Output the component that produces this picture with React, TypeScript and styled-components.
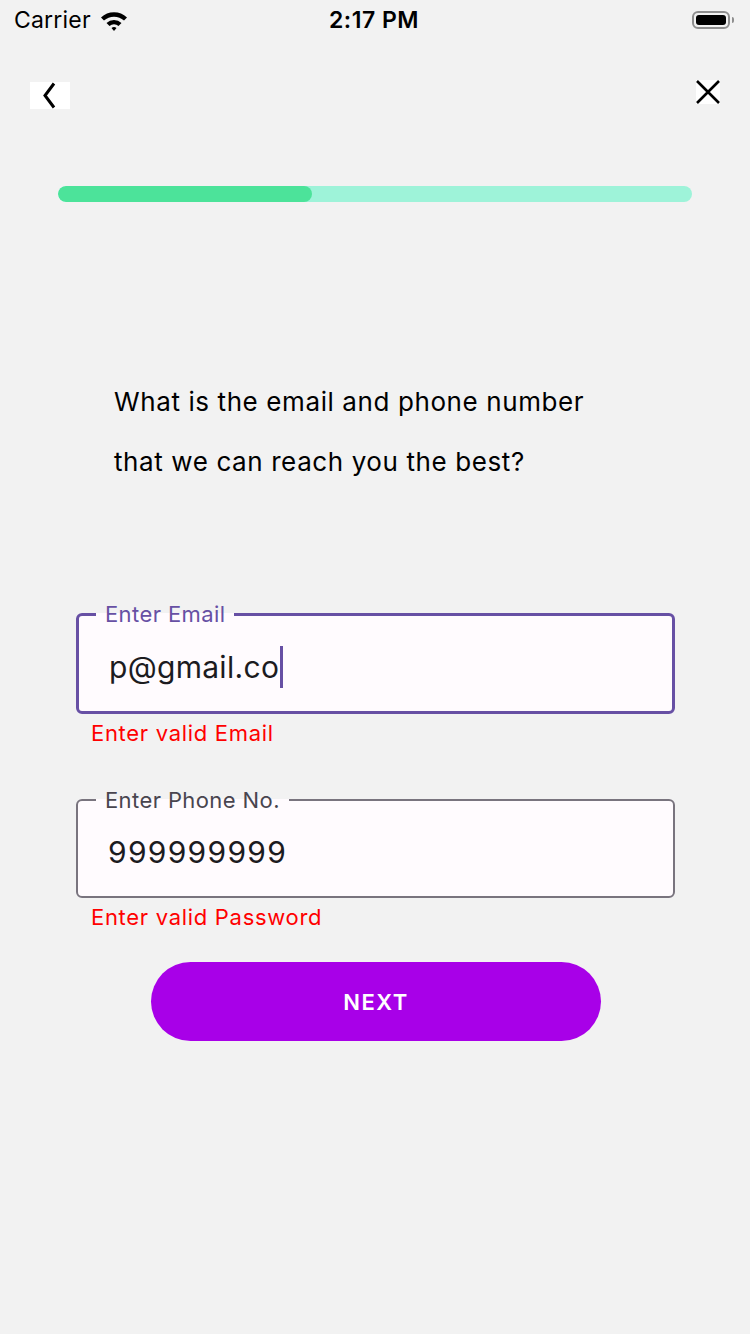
import React from "react";
import styled, { createGlobalStyle } from "styled-components";

const PURPLE = "#6750A4";
const OUTLINE = "#79747E";
const FIELD_BG = "#FFFBFE";
const ERROR = "#FF0000";

const GlobalStyle = createGlobalStyle`
  html, body {
    margin: 0;
    padding: 0;
    background: #f2f2f2;
  }
  body {
    font-family: Inter, "Noto Sans", sans-serif;
    -webkit-font-smoothing: antialiased;
  }
  #root {
    min-height: 1334px;
  }
`;

const App = function App() {
  return (
    <Screen>
      <GlobalStyle />
      <StatusBar>
        <StatusLeft>
          <Carrier>Carrier</Carrier>
          <svg width="30" height="22" viewBox="0 0 30 22">
            <path d="M2 8.5 A19 19 0 0 1 28 8.5 L25 11.5 A15 15 0 0 0 5 11.5 Z" fill="#000" />
            <path d="M7.5 14 A11 11 0 0 1 22.5 14 L19.5 17 A7 7 0 0 0 10.5 17 Z" fill="#000" />
            <path d="M12.5 19 A4 4 0 0 1 17.5 19 L15 22 Z" fill="#000" />
          </svg>
        </StatusLeft>
        <Clock>2:17 PM</Clock>
        <StatusRight>
          <Battery>
            <BatteryFill />
          </Battery>
          <BatteryTip />
        </StatusRight>
      </StatusBar>

      <NavBar>
        <NavButton $w={40} $h={27}>
          <svg width="18" height="27" viewBox="0 0 18 27">
            <path d="M13 1.5 L4 13.5 L13 25.5" stroke="#000" strokeWidth="3" fill="none" />
          </svg>
        </NavButton>
        <NavButton $w={24} $h={24}>
          <svg width="24" height="24" viewBox="0 0 24 24">
            <path d="M1 1 L23 23 M23 1 L1 23" stroke="#000" strokeWidth="2.6" fill="none" />
          </svg>
        </NavButton>
      </NavBar>

      <Progress>
        <ProgressFill style={{ width: "40%" }} />
      </Progress>

      <Question>
        What is the email and phone number
        <br />
        that we can reach you the best?
      </Question>

      <Form>
        <FieldGroup>
          <Field $focused>
            <Legend $focused>Enter Email</Legend>
            <FieldValue $h={84} $pad={4}>
              p@gmail.co
              <Caret />
            </FieldValue>
          </Field>
          <ErrorText>Enter valid Email</ErrorText>
        </FieldGroup>

        <FieldGroup>
          <Field>
            <Legend>Enter Phone No.</Legend>
            <FieldValue $h={83} $pad={6} $digits>
              999999999
            </FieldValue>
          </Field>
          <ErrorText>Enter valid Password</ErrorText>
        </FieldGroup>

        <NextButton>NEXT</NextButton>
      </Form>
    </Screen>
  );
};
export default App;

const Screen = styled.div`
  width: 750px;
  min-height: 1334px;
  background: #f2f2f2;
  display: flex;
  flex-direction: column;
`;

const StatusBar = styled.div`
  height: 40px;
  padding: 0 16px 0 14px;
  display: grid;
  grid-template-columns: 1fr auto 1fr;
  align-items: center;
  font-size: 23px;
  color: #000;
`;

const StatusLeft = styled.div`
  display: flex;
  align-items: center;
  gap: 8px;
`;

const Carrier = styled.span`
  font-weight: 400;
  letter-spacing: 0.2px;
`;

const Clock = styled.span`
  font-weight: 600;
  letter-spacing: 0.5px;
`;

const StatusRight = styled.div`
  display: flex;
  justify-content: flex-end;
  align-items: center;
  gap: 2px;
`;

const Battery = styled.div`
  width: 38px;
  height: 18px;
  border: 2px solid #8e8e8e;
  border-radius: 6px;
  padding: 2px;
  box-sizing: border-box;
  display: flex;
`;

const BatteryFill = styled.div`
  flex: 1;
  background: #000;
  border-radius: 3px;
`;

const BatteryTip = styled.div`
  width: 2px;
  height: 6px;
  background: #8e8e8e;
  border-radius: 0 2px 2px 0;
`;

const NavBar = styled.div`
  margin-top: 42px;
  padding: 0 30px 0 30px;
  display: flex;
  justify-content: space-between;
  align-items: flex-start;
`;

const NavButton = styled.button<{ $w: number; $h: number }>`
  width: ${(p) => p.$w}px;
  height: ${(p) => p.$h}px;
  padding: 0;
  border: none;
  background: #fff;
  display: flex;
  align-items: center;
  justify-content: center;
  &:last-child {
    margin-top: -2px;
  }
`;

const Progress = styled.div`
  margin: 77px 58px 0;
  height: 16px;
  border-radius: 8px;
  background: #9ef3d9;
  overflow: hidden;
`;

const ProgressFill = styled.div`
  height: 100%;
  background: #4ce39a;
  border-radius: 8px;
`;

const Question = styled.p`
  margin: 170px 0 0 114px;
  font-size: 26px;
  line-height: 60px;
  letter-spacing: 0.6px;
  color: #000;
`;

const Form = styled.div`
  margin-top: 109px;
  padding: 0 75px 0 76px;
  display: flex;
  flex-direction: column;
`;

const FieldGroup = styled.div`
  display: flex;
  flex-direction: column;
  margin-bottom: 40px;
  &:nth-child(2) {
    margin-bottom: 31px;
  }
`;

const Field = styled.fieldset<{ $focused?: boolean }>`
  margin: 0;
  padding: 0 0 0 18px;
  min-width: 0;
  border: ${(p) => (p.$focused ? `3px solid ${PURPLE}` : `2px solid ${OUTLINE}`)};
  border-radius: 6px;
  background: ${FIELD_BG};
`;

const Legend = styled.legend<{ $focused?: boolean }>`
  padding: 0 9px;
  margin-left: ${(p) => (p.$focused ? "-1px" : "0")};
  font-size: 22px;
  line-height: 26px;
  letter-spacing: 0.4px;
  color: ${(p) => (p.$focused ? PURPLE : "#49454F")};
`;

const FieldValue = styled.div<{ $h: number; $pad: number; $digits?: boolean }>`
  height: ${(p) => p.$h}px;
  box-sizing: border-box;
  padding: 0 0 ${(p) => p.$pad}px 12px;
  display: flex;
  align-items: center;
  font-size: 30px;
  letter-spacing: ${(p) => (p.$digits ? "1.3px" : "0.3px")};
  color: #1c1b1f;
`;

const Caret = styled.span`
  display: inline-block;
  width: 3px;
  height: 42px;
  margin-left: 1px;
  background: ${PURPLE};
`;

const ErrorText = styled.span`
  margin: 5px 0 0 15px;
  font-size: 22px;
  line-height: 28px;
  letter-spacing: 0.7px;
  color: ${ERROR};
`;

const NextButton = styled.button`
  align-self: center;
  width: 450px;
  height: 79px;
  border: none;
  border-radius: 40px;
  background: #a800e8;
  color: #fff;
  font-family: Inter, "Noto Sans", sans-serif;
  font-size: 22px;
  font-weight: 600;
  letter-spacing: 1.5px;
  margin-left: 1px;
`;
